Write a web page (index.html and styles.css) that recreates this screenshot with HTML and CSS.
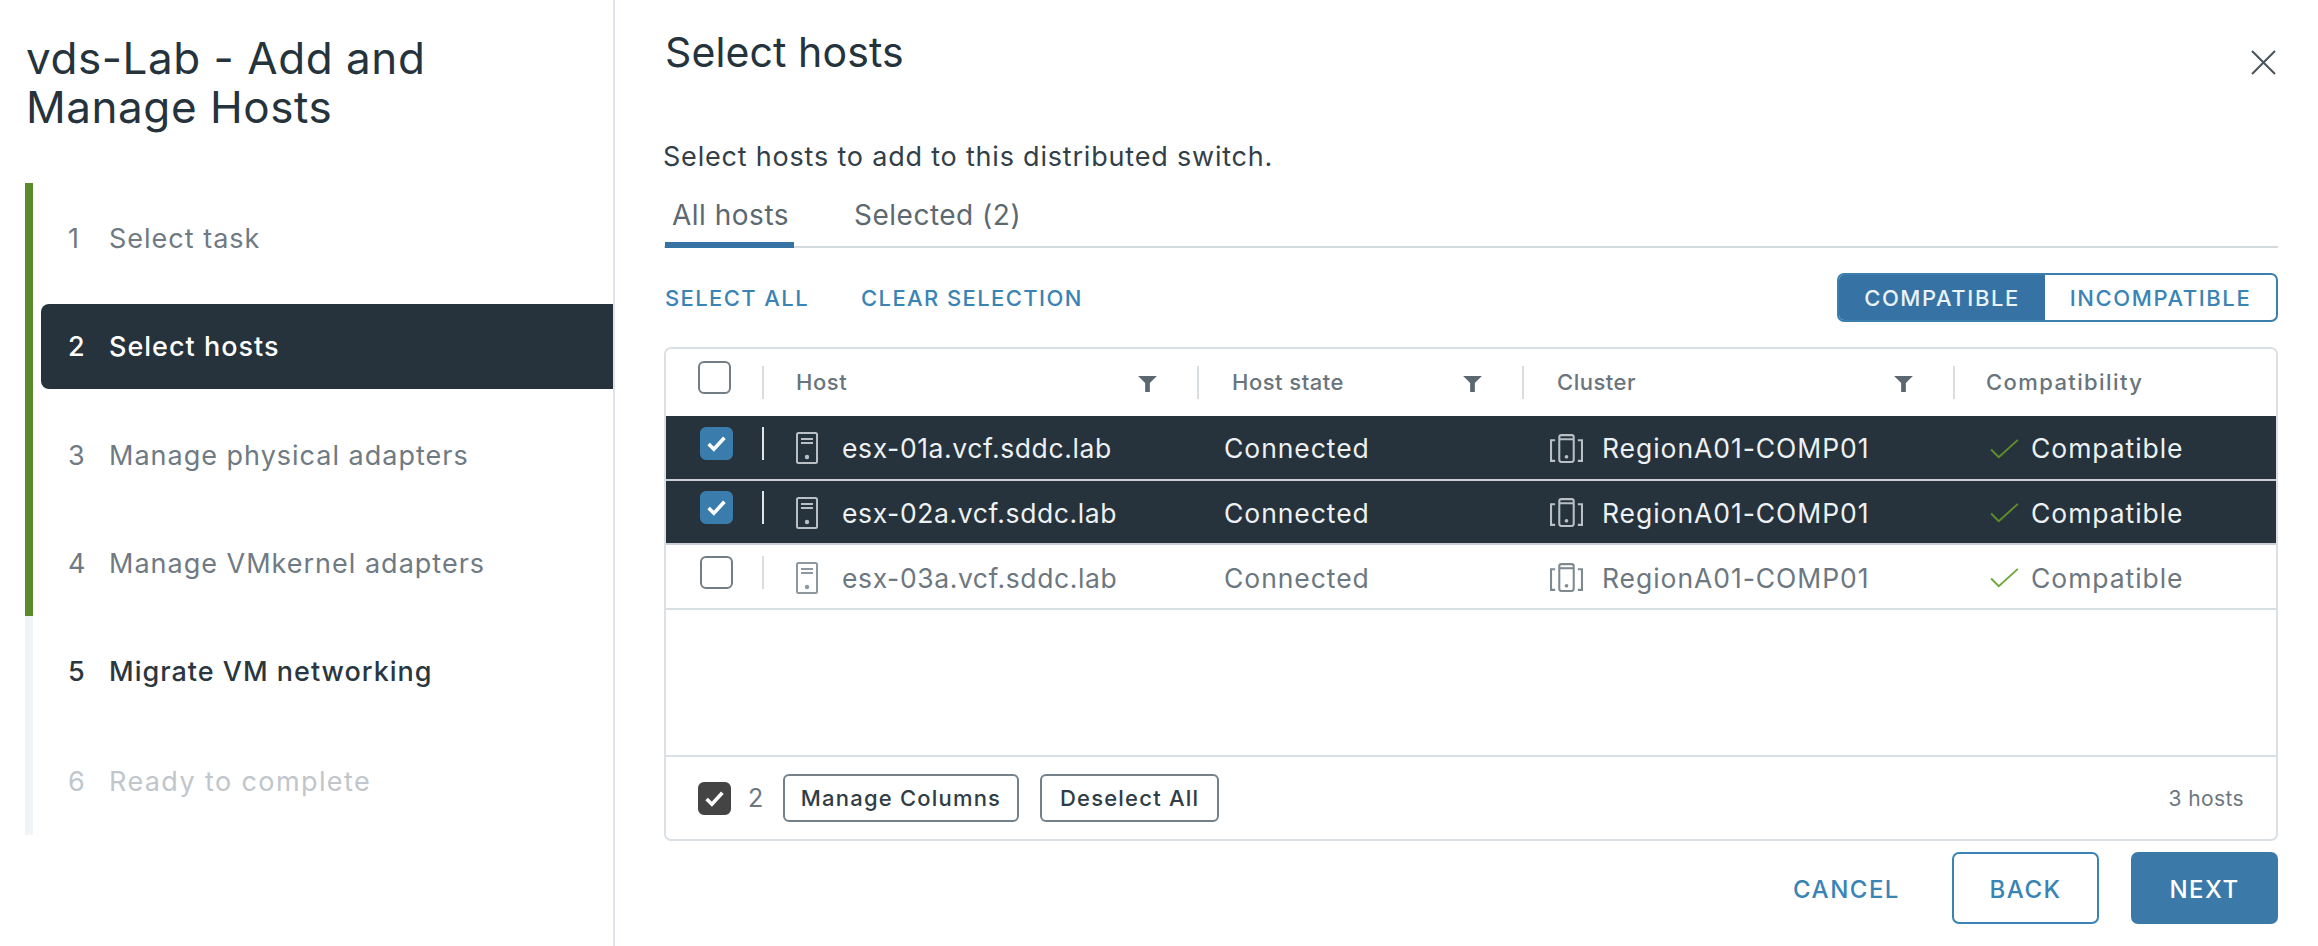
FILE: index.html
```html
<!DOCTYPE html>
<html lang="en">
<head>
<meta charset="utf-8">
<title>vds-Lab - Add and Manage Hosts</title>
<link rel="stylesheet" href="styles.css">
</head>
<body>
<svg class="defs" width="0" height="0" aria-hidden="true">
  <symbol id="i-server" viewBox="0 0 22 32">
    <rect x="1" y="1" width="20" height="30" rx="1.5" fill="none" stroke="currentColor" stroke-width="2"/>
    <path d="M5 7h12M5 11h12" fill="none" stroke="currentColor" stroke-width="2"/>
    <circle cx="11" cy="25" r="2.2" fill="currentColor"/>
  </symbol>
  <symbol id="i-cluster" viewBox="0 0 32 28">
    <rect x="9" y="1" width="14" height="26" rx="2" fill="none" stroke="currentColor" stroke-width="2"/>
    <path d="M9 5h14" fill="none" stroke="currentColor" stroke-width="2"/>
    <circle cx="16" cy="22" r="1.8" fill="currentColor"/>
    <path d="M5 6H1v20h4M27 6h4v20h-4" fill="none" stroke="currentColor" stroke-width="2"/>
  </symbol>
  <symbol id="i-ok" viewBox="0 0 30 22">
    <path d="M1 12l8 8L29 2" fill="none" stroke="currentColor" stroke-width="2"/>
  </symbol>
  <symbol id="i-tick" viewBox="0 0 20 16">
    <path d="M2.500 8.500l5 5 10-11" fill="none" stroke="currentColor" stroke-width="3.400"/>
  </symbol>
  <symbol id="i-filter" viewBox="0 0 20 17">
    <path d="M0 0h20l-7.500 7.500V17h-5V7.500z" fill="currentColor"/>
  </symbol>
</svg>
<div class="wizard">
  <aside class="side">
    <h1 class="side-title">vds-Lab - Add and Manage Hosts</h1>
    <ol class="steps">
      <li class="step done"><div class="step-in"><span class="num">1</span>Select task</div></li>
      <li class="step done"><div class="step-in active"><span class="num">2</span>Select hosts</div></li>
      <li class="step done"><div class="step-in"><span class="num">3</span>Manage physical adapters</div></li>
      <li class="step done"><div class="step-in"><span class="num">4</span>Manage VMkernel adapters</div></li>
      <li class="step next"><div class="step-in"><span class="num">5</span>Migrate VM networking</div></li>
      <li class="step off"><div class="step-in"><span class="num">6</span>Ready to complete</div></li>
    </ol>
  </aside>
  <main class="main">
    <header class="head">
      <h2 class="head-title">Select hosts</h2>
      <svg class="close" viewBox="0 0 24 24"><path d="M1 1l22 22M23 1L1 23" fill="none" stroke="currentColor" stroke-width="2"/></svg>
    </header>
    <p class="desc">Select hosts to add to this distributed switch.</p>
    <nav class="tabs">
      <span class="tab on">All hosts</span>
      <span class="tab">Selected (2)</span>
    </nav>
    <div class="actions">
      <span class="link">SELECT ALL</span>
      <span class="link">CLEAR SELECTION</span>
      <div class="toggle">
        <span class="seg seg-on">COMPATIBLE</span>
        <span class="seg">INCOMPATIBLE</span>
      </div>
    </div>
    <section class="table">
      <div class="row thead">
        <div class="cell c-check"><span class="box box-head"></span></div>
        <div class="cell sep c-host">Host<svg class="filter"><use href="#i-filter"/></svg></div>
        <div class="cell sep">Host state<svg class="filter"><use href="#i-filter"/></svg></div>
        <div class="cell sep">Cluster<svg class="filter"><use href="#i-filter"/></svg></div>
        <div class="cell sep h-compat">Compatibility</div>
      </div>
      <div class="row sel">
        <div class="cell c-check"><span class="box box-on"><svg class="tick"><use href="#i-tick"/></svg></span></div>
        <div class="cell sep c-host"><svg class="i-server"><use href="#i-server"/></svg>esx-01a.vcf.sddc.lab</div>
        <div class="cell c-state">Connected</div>
        <div class="cell c-cluster"><svg class="i-cluster"><use href="#i-cluster"/></svg>RegionA01-COMP01</div>
        <div class="cell c-compat"><svg class="i-ok"><use href="#i-ok"/></svg>Compatible</div>
      </div>
      <div class="row sel">
        <div class="cell c-check"><span class="box box-on"><svg class="tick"><use href="#i-tick"/></svg></span></div>
        <div class="cell sep c-host"><svg class="i-server"><use href="#i-server"/></svg>esx-02a.vcf.sddc.lab</div>
        <div class="cell c-state">Connected</div>
        <div class="cell c-cluster"><svg class="i-cluster"><use href="#i-cluster"/></svg>RegionA01-COMP01</div>
        <div class="cell c-compat"><svg class="i-ok"><use href="#i-ok"/></svg>Compatible</div>
      </div>
      <div class="row plain">
        <div class="cell c-check"><span class="box"></span></div>
        <div class="cell sep c-host"><svg class="i-server"><use href="#i-server"/></svg>esx-03a.vcf.sddc.lab</div>
        <div class="cell c-state">Connected</div>
        <div class="cell c-cluster"><svg class="i-cluster"><use href="#i-cluster"/></svg>RegionA01-COMP01</div>
        <div class="cell c-compat"><svg class="i-ok"><use href="#i-ok"/></svg>Compatible</div>
      </div>
      <div class="spacer"></div>
      <footer class="tfoot">
        <span class="box box-dark"><svg class="tick"><use href="#i-tick"/></svg></span>
        <span class="count">2</span>
        <button class="mini mini-a">Manage Columns</button>
        <button class="mini">Deselect All</button>
        <span class="total">3 hosts</span>
      </footer>
    </section>
    <div class="buttons">
      <button class="btn btn-link">CANCEL</button>
      <button class="btn btn-out">BACK</button>
      <button class="btn btn-fill">NEXT</button>
    </div>
  </main>
</div>
</body>
</html>
```
FILE: styles.css
```css
* { box-sizing: border-box; }
html, body { margin: 0; height: 100%; }
body {
  background: #fff;
  color: #2a3740;
  font-family: Inter, "Liberation Sans", sans-serif;
  font-size: 26.5px;
  overflow: hidden;
}
.defs { display: block; height: 0; }
.wizard { display: flex; height: 946px; }

.side { width: 615px; flex: none; border-right: 2px solid #dde3e8; }
.side-title {
  margin: 34px 40px 0 26px;
  font-size: 44px;
  line-height: 49px;
  font-weight: 400;
  letter-spacing: .55px;
  color: #25333d;
}
.steps {
  list-style: none;
  margin: 51px 0 0 25px;
  padding: 0;
  display: grid;
  grid-auto-rows: 108.33px;
}
.step { display: flex; align-items: center; border-left: 8px solid #5a8a2a; padding-top: 3px; }
.step.next, .step.off { border-left-color: #eff4f8; }
.step.off { height: 110px; }
.step-in {
  flex: 1;
  height: 85px;
  display: flex;
  align-items: center;
  margin-left: 8px;
  padding-left: 27px;
  font-size: 27px;
  letter-spacing: 1px;
  color: #6f7a83;
  border-radius: 8px 0 0 8px;
}
.num { width: 41px; flex: none; letter-spacing: 0; }
.step-in.active { background: #26333c; color: #fff; font-weight: 500; }
.step.next .step-in { color: #2a3740; font-weight: 500; }
.step.off .step-in { color: #c0c6cb; letter-spacing: 1.400px; }

.main { flex: 1; padding: 0 40px 0 49px; min-width: 0; }
.head { display: flex; justify-content: space-between; align-items: flex-start; height: 141px; }
.head-title { margin: 28px 0 0 1px; font-size: 41px; line-height: 48px; font-weight: 400; letter-spacing: .1px; color: #25333d; }
.close { width: 25px; height: 25px; margin: 50px 2px 0 0; color: #4a555d; }
.desc { margin: 0 0 0 -1px; font-size: 27px; line-height: 32px; letter-spacing: .8px; color: #333f48; }
.tabs { display: flex; gap: 50px; height: 75px; padding-top: 10px; border-bottom: 2px solid #d5dae0; }
.tab { height: 65px; padding: 16px 0 0 8px; font-size: 28px; line-height: 32px; letter-spacing: .5px; color: #5d6971; }
.tab.on { width: 129px; margin-left: 1px; margin-right: 2px; padding-left: 7px; border-bottom: 6px solid #3673a4; }

.actions { display: flex; align-items: center; height: 49px; margin-top: 25px; gap: 52px; padding-left: 1px; }
.link { font-size: 22px; letter-spacing: 1.400px; font-weight: 500; color: #3a84b5; }
.toggle {
  display: flex;
  margin-left: auto;
  width: 441px;
  height: 49px;
  border: 2px solid #3a7fae;
  border-radius: 7px;
  overflow: hidden;
}
.seg {
  display: flex;
  align-items: center;
  justify-content: center;
  flex: 1;
  font-size: 22px;
  letter-spacing: 1.600px;
  font-weight: 500;
  color: #3a84b5;
}
.seg-on { flex: none; width: 206px; background: #3673a4; color: #eaf2f7; }

.table {
  display: flex;
  flex-direction: column;
  height: 494px;
  margin-top: 25px;
  border: 2px solid #dbe0e5;
  border-radius: 7px;
  overflow: hidden;
}
.row { display: grid; grid-template-columns: 96px 435px 325px 431px 1fr; flex: none; height: 64.500px; border-bottom: 2px solid #d9dee3; letter-spacing: .95px; }
.thead { height: 67px; border-bottom: 0; font-size: 22px; font-weight: 500; letter-spacing: .5px; color: #6a747c; }
.sel { background: #26333c; color: #eef1f3; border-bottom-color: #c9cfd4; }
.plain { color: #6d7780; }
.cell { display: flex; align-items: center; min-width: 0; padding-top: 2px; }
.thead .cell { padding: 0 40px 2px 0; }
.sep { padding-right: 40px; }
.sep::before { content: ""; flex: none; width: 2px; height: 33px; margin: -10px 33px 0 0; background: #d8dde1; }
.c-host { letter-spacing: .6px; }
.c-host::before { margin-right: 32px; }
.thead .sep::before { margin-top: 2px; }
.h-compat { letter-spacing: 1.400px; }
.h-compat::before { margin-right: 31px; }
.sel .sep::before { background: #dfe4e7; }
.filter { width: 19px; height: 16px; margin: 4px 0 0 auto; color: #5c6870; }
.c-check { padding: 0 0 8px 34px; }
.thead .c-check { padding: 12px 0 0 32px; align-items: flex-start; }
.plain .cell:not(.c-check) { padding-top: 3px; }
.box {
  display: flex;
  align-items: center;
  justify-content: center;
  width: 33px;
  height: 33px;
  flex: none;
  border: 2px solid #727d85;
  border-radius: 6px;
  background: #fff;
}
.box-on { background: #3a7cac; border-color: #3a7cac; color: #fff; }
.box-dark { background: #444; border-color: #444; color: #fff; }
.tick { width: 21px; height: 17px; }
.i-server { width: 22px; height: 32px; flex: none; margin-right: 24px; color: #8f989f; }
.sel .i-server { color: #b9c0c5; }
.c-state { padding-left: 27px; }
.c-cluster { padding-left: 28px; }
.i-cluster { width: 33px; height: 29px; flex: none; margin-right: 19px; color: #7f8990; }
.sel .i-cluster { color: #b9c0c5; }
.c-compat { padding-left: 37px; }
.i-ok { width: 29px; height: 21px; flex: none; margin-right: 12px; color: #6fa83a; }
.sel .i-ok { color: #5e8f2a; }
.spacer { flex: 1; }
.tfoot {
  display: flex;
  align-items: center;
  height: 84px;
  flex: none;
  padding: 0 32px;
  border-top: 2px solid #dbe0e5;
  font-size: 21px;
}
.count { width: 52px; padding-left: 17px; font-size: 25px; color: #6d7780; }
.mini {
  height: 48px;
  padding: 0 18px;
  font: 500 22px Inter, "Liberation Sans", sans-serif;
  letter-spacing: 1.200px;
  color: #2f3d47;
  background: #fff;
  border: 2px solid #74808a;
  border-radius: 6px;
}
.mini-a { margin-right: 21px; width: 236px; padding: 0; }
.total { margin-left: auto; letter-spacing: .4px; color: #6d7780; }

.buttons { display: flex; justify-content: flex-end; gap: 32px; margin-top: 11px; }
.btn {
  width: 147px;
  height: 72px;
  padding: 3px 0 0;
  font: 500 24px Inter, "Liberation Sans", sans-serif;
  letter-spacing: 1.500px;
  border-radius: 7px;
  border: 2px solid transparent;
  background: #fff;
  color: #3a84b5;
}
.btn-out { border-color: #3a84b5; }
.btn-fill { background: #3a79a8; border-color: #3a79a8; color: #fff; }
```
